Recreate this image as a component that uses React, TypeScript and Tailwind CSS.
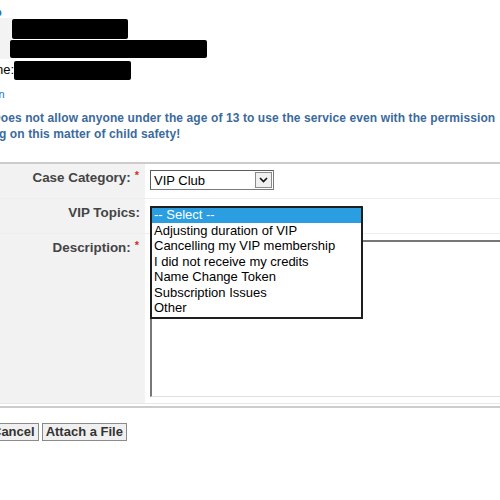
import React from "react";

export default function App() {
  const options = [
    "Adjusting duration of VIP",
    "Cancelling my VIP membership",
    "I did not receive my credits",
    "Name Change Token",
    "Subscription Issues",
    "Other",
  ];
  return (
    <div className="w-[500px] h-[500px] overflow-hidden bg-white font-['Liberation_Sans',Arial,sans-serif] text-[13px] text-black">
      {/* top fragment */}
      <div className="h-[18px] overflow-hidden">
        <div className="pt-[6px] -ml-[5px] text-[11px] leading-[12px] font-bold text-[#2a6fb5]">p</div>
      </div>
      {/* redacted rows */}
      <div className="flex h-[22px]">
        <div className="w-[12px] bg-[#f3f3f3]" />
        <div className="w-[116px] h-[20px] mt-[1px] bg-black rounded-[2px]" />
      </div>
      <div className="flex h-[19px]">
        <div className="w-[10px] bg-[#f3f3f3]" />
        <div className="w-[197px] h-[18px] bg-black rounded-[2px]" />
      </div>
      <div className="flex h-[22px] items-center">
        <span className="-ml-[4px] leading-[16px]">ne:</span>
        <div className="w-[117px] h-[19px] bg-black rounded-[2px]" />
      </div>
      <div className="h-[25px] overflow-hidden">
        <div className="pt-[7px] -ml-[4px] text-[11px] leading-[12px] text-[#2a6fb5]">in</div>
      </div>
      {/* warning */}
      <div className="pt-[4px] font-bold text-[12px] tracking-[0.1px] leading-[16px] text-[#3b6a9c] whitespace-nowrap">
        <div className="-ml-[8px]">Does not allow anyone under the age of 13 to use the service even with the permission</div>
        <div className="-ml-[1px]">g on this matter of child safety!</div>
      </div>
      <div className="h-[20px]" />
      {/* form */}
      <div className="border-t-[2px] border-[#cccccc]">
        <div className="flex h-[35px] border-b border-[#eeeeee]">
          <div className="w-[145px] shrink-0 bg-[#f2f2f2] flex justify-end items-start pt-[6px] leading-[15px] pr-[6px] font-bold text-[#444444] text-[13.4px]">
            Case Category:<span className="text-[#d32f2f] ml-[4px] text-[11px] -mt-[2px]">*</span>
          </div>
          <div className="flex items-start pt-[6px] pl-[5px]">
            <div className="w-[124px] h-[20px] border border-[#7a7a7a] border-t-[#5c5c5c] border-l-[#5c5c5c] bg-white flex items-center justify-between pl-[3px] pr-[1px]">
              <span className="leading-[15px]">VIP Club</span>
              <div className="w-[17px] h-[16px] border border-[#8a8a8a] bg-[#f0f0f0] flex items-center justify-center">
                <svg width="9" height="6" viewBox="0 0 9 6">
                  <path d="M1 1 L4.5 4.5 L8 1" fill="none" stroke="#111" strokeWidth="1.6" />
                </svg>
              </div>
            </div>
          </div>
        </div>
        <div className="flex h-[35px] border-b border-[#eeeeee] relative">
          <div className="w-[145px] shrink-0 bg-[#f2f2f2] flex justify-end items-start pt-[6px] leading-[15px] pr-[5px] font-bold text-[#444444] text-[13.4px]">
            VIP Topics:
          </div>
          <div className="absolute left-[150px] top-[7px] w-[213px] border-2 border-[#1e1e1e] bg-white z-10 leading-[15.4px] text-[13px] pb-[2px]">
            <div className="bg-[#2a9ee0] text-white px-[2px] h-[15px] leading-[14px]">-- Select --</div>
            {options.map((o) => (
              <div key={o} className="px-[2px]">{o}</div>
            ))}
          </div>
        </div>
        <div className="flex h-[170px] border-b border-[#e8e8e8]">
          <div className="w-[145px] shrink-0 bg-[#f2f2f2] flex justify-end items-start pt-[6px] leading-[15px] pr-[6px] font-bold text-[#444444] text-[13.4px]">
            Description:<span className="text-[#d32f2f] ml-[4px] text-[11px] -mt-[2px]">*</span>
          </div>
          <div className="flex-1 pl-[5px] pt-[6px] pb-[6px]">
            <div className="h-full border-t-2 border-l-2 border-[#777777] border-b border-b-[#e0e0e0] -mr-[10px]" />
          </div>
        </div>
        <div className="h-[2px]" />
        <div className="border-t-[2px] border-[#cccccc]" />
      </div>
      <div className="flex gap-[3px] mt-[15px]">
        <button className="-ml-[12px] h-[18px] px-[3px] border border-[#8a8a8a] bg-[#f0f0f0] font-bold text-[13px] leading-[14px] text-[#333333]">Cancel</button>
        <button className="h-[18px] px-[3px] border border-[#8a8a8a] bg-[#f0f0f0] font-bold text-[13px] leading-[14px] text-[#333333]">Attach a File</button>
      </div>
    </div>
  );
}
